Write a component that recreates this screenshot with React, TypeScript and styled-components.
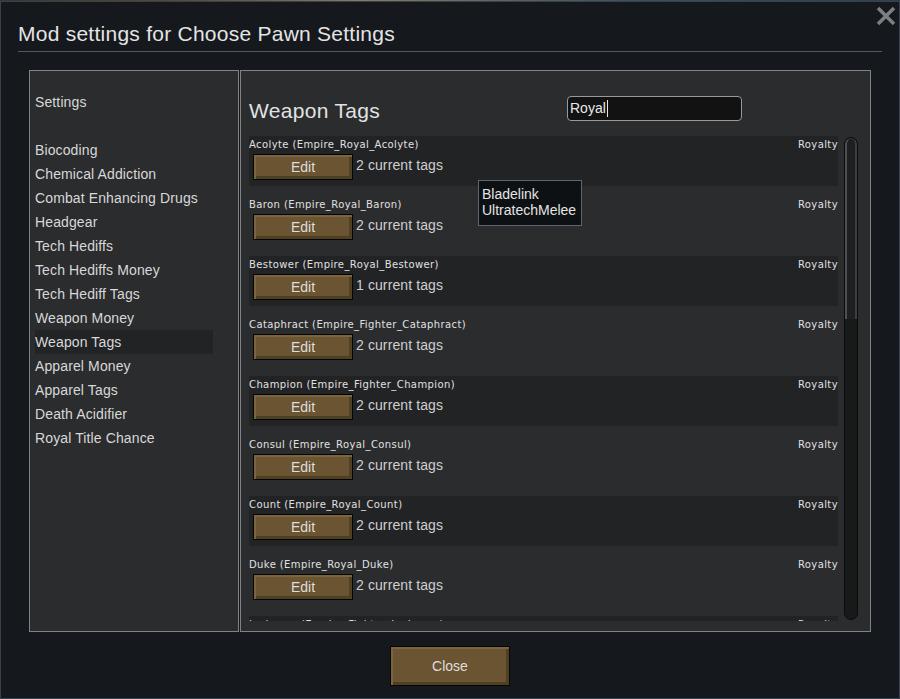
import styled, { createGlobalStyle } from "styled-components";

// Types
interface TagRow {
  label: string;
  count: number;
  source: string;
}

const GlobalStyle = createGlobalStyle`
  html, body {
    margin: 0;
    padding: 0;
    background: linear-gradient(90deg, #3a3530 0%, #5a4a30 20%, #8a7a60 40%, #3a5060 70%, #2a4050 100%);
    overflow: hidden;
  }
  * { box-sizing: border-box; }
`;

const Window = styled.div`
  position: relative;
  margin-top: 1px;
  width: 900px;
  height: 698px;
  background: #15181c;
  border: 1px solid #39414a;
  padding: 0 17px;
  display: flex;
  flex-direction: column;
  font-family: "Liberation Sans", Arial, sans-serif;
  color: #dcdcdc;
`;

const Title = styled.div`
  padding-top: 20px;
  height: 44px;
  font-size: 21px;
  letter-spacing: 0.25px;
  line-height: 24px;
  color: #e4e4e4;
`;

const Divider = styled.div`
  margin-top: 5px;
  height: 1px;
  background: #55595e;
`;

const CloseX = styled.svg`
  position: absolute;
  top: 3px;
  right: 2px;
  width: 22px;
  height: 22px;
`;

const Body = styled.div`
  margin: 18px 0 0 11px;
  width: 842px;
  height: 562px;
  display: flex;
  gap: 1px;
`;

const Panel = styled.div<{ $width: number }>`
  position: relative;
  width: ${(p) => p.$width}px;
  height: 100%;
  background: #2b2c2e;
  border: 1px solid #808285;
`;

const Sidebar = styled(Panel)`
  padding: 19px 0 0 5px;
  display: flex;
  flex-direction: column;
`;

const NavItem = styled.div<{ $active?: boolean }>`
  width: 178px;
  height: 24px;
  font-size: 14px;
  letter-spacing: 0.12px;
  line-height: 24px;
  color: #d8d8d8;
  background: ${(p) => (p.$active ? "#222325" : "transparent")};
  white-space: nowrap;
`;

const NavSpacer = styled.div`
  height: 24px;
`;

const Content = styled(Panel)`
  padding: 0 12px 0 8px;
  display: flex;
  flex-direction: column;
`;

const Header = styled.div`
  height: 65px;
  display: flex;
  align-items: center;
  padding-top: 10px;
  padding-bottom: 1px;
`;

const Heading = styled.div`
  font-size: 21px;
  letter-spacing: 0.3px;
  line-height: 26px;
  color: #e2e2e2;
  width: 318px;
  margin-top: 5px;
`;

const Search = styled.div`
  width: 175px;
  height: 25px;
  background: #121212;
  border: 1px solid #9a9a9a;
  border-radius: 4px;
  padding-left: 2px;
  display: flex;
  align-items: center;
  font-size: 14px;
  color: #e8e8e8;
`;

const Caret = styled.span`
  display: inline-block;
  width: 1px;
  height: 17px;
  background: #e8e8e8;
  margin-left: 1px;
`;

const ListArea = styled.div`
  display: flex;
  gap: 6px;
  height: 485px;
`;

const List = styled.div`
  width: 589px;
  height: 485px;
  overflow: hidden;
`;

const Row = styled.div<{ $shaded: boolean }>`
  height: 60px;
  position: relative;

  &::before {
    content: "";
    position: absolute;
    left: 0;
    top: 0;
    right: 0;
    height: 50px;
    background: ${(p) => (p.$shaded ? "#222324" : "transparent")};
  }
`;

const RowInner = styled.div`
  position: relative;
`;

const LabelLine = styled.div`
  display: flex;
  justify-content: space-between;
  height: 16px;
  padding-top: 1px;
  line-height: 16px;
  font-family: "DejaVu Sans", Verdana, sans-serif;
  font-size: 10px;
  letter-spacing: 0.4px;
  color: #e0e0e0;
  white-space: nowrap;
`;

const Controls = styled.div`
  margin-top: 2px;
  padding-left: 4px;
  display: flex;
  align-items: center;
  gap: 3px;
`;

const Button = styled.div<{ $w: number; $h: number }>`
  width: ${(p) => p.$w}px;
  height: ${(p) => p.$h}px;
  background: #6a5431;
  border: 1px solid #050505;
  box-shadow: inset 2px 2px 0 #7b6541, inset -3px -3px 0 #4f3f23;
  display: flex;
  align-items: center;
  justify-content: center;
  font-size: 14px;
  color: #dedede;
`;

const Count = styled.span`
  font-size: 14px;
  letter-spacing: 0.1px;
  color: #cfcfcf;
  margin-top: -4px;
`;

const ScrollTrack = styled.div`
  margin-top: 1px;
  width: 14px;
  height: 483px;
  background: #181919;
  border: 1px solid #0b0b0b;
  border-radius: 7px;
  overflow: hidden;
`;

const ScrollThumb = styled.div`
  height: 181px;
  background: #1e1f20;
  border-radius: 6px 6px 0 0;
  border-left: 2px solid #4e4f50;
  border-right: 2px solid #3e3f40;
  border-top: 1px solid #3a3b3c;
`;

const Tooltip = styled.div`
  position: absolute;
  left: 237px;
  top: 109px;
  width: 104px;
  height: 46px;
  background: #0e1113;
  border: 1px solid #5b6670;
  padding: 5px 0 0 3px;
  font-size: 14px;
  line-height: 16px;
  color: #e4e4e4;
`;

const Footer = styled.div`
  margin-top: 14px;
  display: flex;
  justify-content: center;
`;

const navItems = [
  "Biocoding",
  "Chemical Addiction",
  "Combat Enhancing Drugs",
  "Headgear",
  "Tech Hediffs",
  "Tech Hediffs Money",
  "Tech Hediff Tags",
  "Weapon Money",
  "Weapon Tags",
  "Apparel Money",
  "Apparel Tags",
  "Death Acidifier",
  "Royal Title Chance",
];

const rows: TagRow[] = [
  { label: "Acolyte (Empire_Royal_Acolyte)", count: 2, source: "Royalty" },
  { label: "Baron (Empire_Royal_Baron)", count: 2, source: "Royalty" },
  { label: "Bestower (Empire_Royal_Bestower)", count: 1, source: "Royalty" },
  { label: "Cataphract (Empire_Fighter_Cataphract)", count: 2, source: "Royalty" },
  { label: "Champion (Empire_Fighter_Champion)", count: 2, source: "Royalty" },
  { label: "Consul (Empire_Royal_Consul)", count: 2, source: "Royalty" },
  { label: "Count (Empire_Royal_Count)", count: 2, source: "Royalty" },
  { label: "Duke (Empire_Royal_Duke)", count: 2, source: "Royalty" },
  { label: "Janissary (Empire_Fighter_Janissary)", count: 2, source: "Royalty" },
];

const App = () => {
  return (
    <>
      <GlobalStyle />
      <Window>
        <Title>Mod settings for Choose Pawn Settings</Title>
        <Divider />
        <CloseX viewBox="0 0 22 22">
          <path d="M3 3 L19 19 M19 3 L3 19" stroke="#7c7e81" strokeWidth="3.6" />
        </CloseX>

        <Body>
          <Sidebar $width={210}>
            <NavItem>Settings</NavItem>
            <NavSpacer />
            {navItems.map((item) => (
              <NavItem key={item} $active={item === "Weapon Tags"}>
                {item}
              </NavItem>
            ))}
          </Sidebar>

          <Content $width={631}>
            <Header>
              <Heading>Weapon Tags</Heading>
              <Search>
                Royal
                <Caret />
              </Search>
            </Header>
            <ListArea>
              <List>
                {rows.map((row, i) => (
                  <Row key={row.label} $shaded={i % 2 === 0}>
                    <RowInner>
                      <LabelLine>
                        <span>{row.label}</span>
                        <span>{row.source}</span>
                      </LabelLine>
                      <Controls>
                        <Button $w={100} $h={26}>Edit</Button>
                        <Count>{row.count} current tags</Count>
                      </Controls>
                    </RowInner>
                  </Row>
                ))}
              </List>
              <ScrollTrack>
                <ScrollThumb />
              </ScrollTrack>
            </ListArea>
            <Tooltip>
              Bladelink
              <br />
              UltratechMelee
            </Tooltip>
          </Content>
        </Body>

        <Footer>
          <Button $w={120} $h={40}>Close</Button>
        </Footer>
      </Window>
    </>
  );
};

export default App;
